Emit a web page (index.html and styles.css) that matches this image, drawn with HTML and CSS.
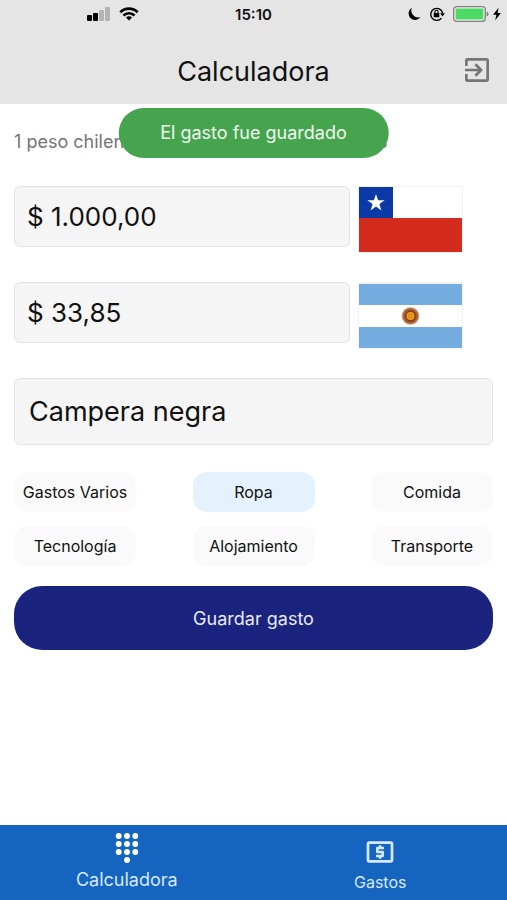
FILE: index.html
```html
<!DOCTYPE html>
<html lang="es">
<head>
<meta charset="utf-8">
<meta name="viewport" content="width=device-width, initial-scale=1">
<title>Calculadora</title>
<link rel="stylesheet" href="styles.css">
</head>
<body>
<div class="app">
  <header class="top">
    <div class="status">
      <div class="status-left">
        <svg width="24" height="14" viewBox="0 0 24 14" aria-hidden="true">
          <rect x="0" y="8" width="5" height="6" rx="1"/>
          <rect x="6" y="6" width="5" height="8" rx="1"/>
          <rect x="12" y="3" width="5" height="11" rx="1" fill="#b4b4b4"/>
          <rect x="18" y="0" width="5" height="14" rx="1" fill="#b4b4b4"/>
        </svg>
        <svg width="20" height="14" viewBox="0 0 20 14" fill="none" stroke="#000" stroke-width="2.6" aria-hidden="true">
          <path d="M1.3 5.2a12.4 12.4 0 0 1 17.4 0M4.4 8.5a8 8 0 0 1 11.2 0"/>
          <path d="M10 13.6 6.9 10.5a4.4 4.4 0 0 1 6.2 0z" fill="#000" stroke="none"/>
        </svg>
      </div>
      <time class="clock">15:10</time>
      <div class="status-right">
        <svg width="14" height="14" viewBox="0 0 14 14" aria-hidden="true"><path d="M4.800.8A6.500 6.500 0 1 0 13.500 10 7 7 0 0 1 4.800.8z"/></svg>
        <svg width="16" height="16" viewBox="0 0 16 16" aria-hidden="true">
          <path d="M12.4 12.2A6 6 0 1 1 13.6 7" fill="none" stroke="#000" stroke-width="1.4"/>
          <path d="M11 7.2h5l-2.5 3.2z"/>
          <rect x="4.7" y="7" width="5.6" height="4.2" rx=".5"/>
          <path d="M5.9 7V5.800a1.6 1.6 0 0 1 3.2 0V7" fill="none" stroke="#000" stroke-width="1.1"/>
        </svg>
        <svg width="36" height="16" viewBox="0 0 36 16" aria-hidden="true">
          <rect x=".7" y=".7" width="31.6" height="14.6" rx="3" fill="#f2f2f2" stroke="#808080" stroke-width="1.3"/>
          <rect x="2.6" y="2.6" width="27.8" height="10.8" rx="1.2" fill="#4cd964"/>
          <path d="M33.6 5.6q2 .7 2 2.4t-2 2.4z" fill="#808080"/>
        </svg>
        <svg width="8" height="14" viewBox="0 0 8 14" aria-hidden="true"><path d="M5.6.8 0 7.8h3.4L2.2 13.2 8 6H4.6z"/></svg>
      </div>
    </div>
    <div class="title-bar">
      <h1 class="title">Calculadora</h1>
      <button class="exit" type="button" aria-label="Salir">
        <svg width="32" height="32" viewBox="0 0 24 24" fill="#757575" aria-hidden="true"><path d="M10.09 15.59 11.5 17l5-5-5-5-1.41 1.41L12.67 11H3v2h9.67l-2.58 2.59zM19 3H5a2 2 0 0 0-2 2v4h2V5h14v14H5v-4H3v4a2 2 0 0 0 2 2h14a2 2 0 0 0 2-2V5a2 2 0 0 0-2-2z"/></svg>
      </button>
    </div>
    <div class="toast" role="status">El gasto fue guardado</div>
  </header>

  <main class="content">
    <p class="rate">1 peso chileno son 0,0338 pesos argentinos</p>
    <div class="amount">
      <input class="field" type="text" value="$ 1.000,00" aria-label="Pesos chilenos">
      <svg class="flag" viewBox="0 0 105 67" role="img" aria-label="Chile">
        <rect width="105" height="67" fill="#f1f2f4"/>
        <rect x="1" y="1" width="103" height="32" fill="#fff"/>
        <rect x="1" y="1" width="34" height="31" fill="#0b3aa6"/>
        <rect x="1" y="32" width="103" height="34" fill="#d52b1e"/>
        <path fill="#fff" d="m18 8 2.1 6.2h6.6l-5.3 3.9 2 6.3-5.4-3.8-5.4 3.8 2-6.3-5.3-3.9h6.6z"/>
      </svg>
    </div>
    <div class="amount">
      <input class="field" type="text" value="$ 33,85" aria-label="Pesos argentinos">
      <svg class="flag" viewBox="0 0 105 67" role="img" aria-label="Argentina">
        <rect width="105" height="67" fill="#f1f2f4"/>
        <rect x="1" y="2" width="103" height="64" fill="#74acdf"/>
        <rect x="1" y="23" width="103" height="22" fill="#fff"/>
        <circle cx="52.5" cy="34" r="9" fill="#d9b7a0"/>
        <circle cx="52.5" cy="34" r="8" fill="#a9683f"/>
        <circle cx="52.5" cy="34" r="6" fill="#8c3f1c"/>
        <circle cx="52.5" cy="34" r="4" fill="#f0a020"/>
        <circle cx="52.5" cy="34" r="2" fill="none" stroke="#c87414" stroke-width=".7"/>
      </svg>
    </div>
    <input class="field field-name" type="text" value="Campera negra" aria-label="Nombre del gasto">
    <div class="chips">
      <button class="chip" type="button">Gastos Varios</button>
      <button class="chip chip-on" type="button" aria-pressed="true">Ropa</button>
      <button class="chip" type="button">Comida</button>
      <button class="chip" type="button">Tecnología</button>
      <button class="chip" type="button">Alojamiento</button>
      <button class="chip" type="button">Transporte</button>
    </div>
    <button class="save" type="button">Guardar gasto</button>
  </main>

  <nav class="tabs">
    <a class="tab tab-on" href="#calculadora">
      <svg width="32" height="32" viewBox="0 0 24 24" fill="#fff" aria-hidden="true">
        <circle cx="5.800" cy="3" r="2.200"/><circle cx="12" cy="3" r="2.200"/><circle cx="18.200" cy="3" r="2.200"/>
        <circle cx="5.800" cy="9" r="2.200"/><circle cx="12" cy="9" r="2.200"/><circle cx="18.200" cy="9" r="2.200"/>
        <circle cx="5.800" cy="15" r="2.200"/><circle cx="12" cy="15" r="2.200"/><circle cx="18.200" cy="15" r="2.200"/>
        <circle cx="12" cy="21" r="2.200"/>
      </svg>
      Calculadora
    </a>
    <a class="tab" href="#gastos">
      <svg width="32" height="32" viewBox="0 0 24 24" fill="#d6e9fb" aria-hidden="true"><path d="M11 17h2v-1h1a1 1 0 0 0 1-1v-3a1 1 0 0 0-1-1h-3v-1h4V8h-2V7h-2v1h-1a1 1 0 0 0-1 1v3a1 1 0 0 0 1 1h3v1H9v2h2v1zm9-13H4a2 2 0 0 0-2 2v12a2 2 0 0 0 2 2h16a2 2 0 0 0 2-2V6a2 2 0 0 0-2-2zm0 14H4V6h16v12z"/></svg>
      Gastos
    </a>
  </nav>
</div>
</body>
</html>
```
FILE: styles.css
```css
* {
  box-sizing: border-box;
}

body {
  margin: 0;
  background: #fff;
  color: #111;
  font-family: Inter, Roboto, "Liberation Sans", sans-serif;
}

button,
input {
  font: inherit;
  color: inherit;
  border: 0;
}

svg {
  display: block;
}

.app {
  display: flex;
  flex-direction: column;
  min-height: 100vh;
}

.top {
  position: relative;
  background: #e5e5e5;
}

.status {
  display: grid;
  grid-template-columns: 1fr auto 1fr;
  align-items: center;
  height: 28px;
  padding: 0 6px;
}

.status-left,
.status-right {
  display: flex;
  align-items: center;
  gap: 8px;
}

.status-left {
  padding-left: 81px;
}

.status-right {
  justify-content: flex-end;
}

.status-right svg:last-child {
  margin-left: -4px;
}

.clock {
  font-size: 15px;
  font-weight: 600;
}

.title-bar {
  display: grid;
  grid-template-columns: 1fr auto 1fr;
  align-items: center;
  height: 76px;
  padding: 12px 14px 0;
}

.title {
  grid-column: 2;
  margin: 0;
  font-size: 27px;
  font-weight: 400;
  line-height: 36px;
}

.exit {
  justify-self: end;
  padding: 0 0 4px;
  background: none;
}

.toast {
  position: absolute;
  top: 108px;
  left: 50%;
  transform: translateX(-50%);
  padding: 13px 42px;
  border-radius: 25px;
  background: #47a44e;
  color: #f1faf1;
  font-size: 18px;
  line-height: 24px;
  white-space: nowrap;
}

.content {
  flex: 1;
  padding: 26px 14px;
}

.rate {
  margin: 0 0 32px;
  color: #757575;
  font-size: 18px;
  line-height: 24px;
}

.amount {
  display: flex;
  align-items: flex-start;
  gap: 8px;
  margin-bottom: 29px;
  padding-right: 30px;
}

.field {
  flex: 1;
  min-width: 0;
  height: 61px;
  padding: 0 12px;
  border: 1px solid #e4e4e4;
  border-radius: 6px;
  background: #f5f5f5;
  font-size: 26px;
}

.field-name {
  display: block;
  width: 100%;
  height: 67px;
  padding: 0 14px;
  font-size: 27px;
}

.flag {
  width: 105px;
  height: 67px;
}

.chips {
  display: grid;
  grid-template-columns: repeat(3, 122px);
  justify-content: space-between;
  gap: 14px 0;
  margin: 27px 0 20px;
}

.chip {
  height: 40px;
  padding: 0;
  border-radius: 14px;
  background: #fafafa;
  font-size: 16px;
}

.chip-on {
  background: #e3f2fd;
}

.save {
  width: 100%;
  height: 64px;
  border-radius: 28px;
  background: #1a237e;
  color: #e8eaf6;
  font-size: 18px;
}

.tabs {
  display: grid;
  grid-template-columns: 1fr 1fr;
  height: 75px;
  background: #1565c0;
}

.tab {
  display: flex;
  flex-direction: column;
  align-items: center;
  justify-content: flex-end;
  gap: 4px;
  padding-bottom: 8px;
  color: #d6e9fb;
  font-size: 16px;
  line-height: 20px;
  text-decoration: none;
}

.tab-on {
  font-size: 18px;
  line-height: 24px;
}
```
